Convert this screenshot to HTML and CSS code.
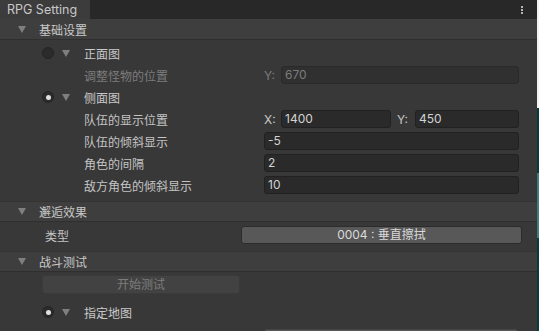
FILE: index.html
```html
<!DOCTYPE html>
<html lang="en">
<head>
    <meta charset="UTF-8">
    <meta name="viewport" content="width=device-width, initial-scale=1.0">
    <title>RPG Setting</title>
    <link rel="stylesheet" href="styles.css">
</head>
<body>
    <div class="window">
        <div class="panel">
            <div class="tabbar">
                <div class="tab">RPG Setting</div>
                <div class="menu"><span></span><span></span><span></span></div>
            </div>

            <div class="section-head"><span class="arrow"></span>基础设置</div>
            <div class="section first">
                <div class="row">
                    <span class="toggle"></span><span class="arrow small"></span>
                    <span class="toggle-label">正面图</span>
                </div>
                <div class="row">
                    <span class="label disabled">调整怪物的位置</span>
                    <div class="field">
                        <span class="axis disabled">Y:</span>
                        <span class="input disabled">670</span>
                    </div>
                </div>
                <div class="row">
                    <span class="toggle on"></span><span class="arrow small"></span>
                    <span class="toggle-label">侧面图</span>
                </div>
                <div class="row">
                    <span class="label">队伍的显示位置</span>
                    <div class="field pairs">
                        <div class="pair"><span class="axis">X:</span><span class="input">1400</span></div>
                        <div class="pair"><span class="axis">Y:</span><span class="input">450</span></div>
                    </div>
                </div>
                <div class="row">
                    <span class="label">队伍的倾斜显示</span>
                    <div class="field"><span class="input">-5</span></div>
                </div>
                <div class="row">
                    <span class="label">角色的间隔</span>
                    <div class="field"><span class="input">2</span></div>
                </div>
                <div class="row">
                    <span class="label">敌方角色的倾斜显示</span>
                    <div class="field"><span class="input">10</span></div>
                </div>
            </div>

            <div class="section-head"><span class="arrow"></span>邂逅效果</div>
            <div class="section">
                <div class="row">
                    <span class="label short">类型</span>
                    <span class="button wide">0004 : 垂直擦拭</span>
                </div>
            </div>

            <div class="section-head"><span class="arrow"></span>战斗测试</div>
            <div class="section last">
                <div class="button start">开始测试</div>
                <div class="row">
                    <span class="toggle on"></span><span class="arrow small"></span>
                    <span class="toggle-label">指定地图</span>
                </div>
                <div class="row">
                    <span class="label"></span>
                    <span class="button field-button"></span>
                </div>
            </div>
        </div>
        <div class="edge">
            <div class="edge-white"></div>
            <div class="edge-dark"></div>
            <div class="edge-light"></div>
            <div class="edge-dark rest"></div>
        </div>
    </div>
</body>
</html>
```

FILE: styles.css
```css
html, body { margin: 0; height: 100%; overflow: hidden; }
body { font-family: Inter, "Noto Sans CJK SC", sans-serif; font-size: 12px; color: #c4c4c4; background: #383838; }

.window { display: flex; height: 331px; }
.panel { width: 537px; background: #383838; overflow: hidden; }

.tabbar { height: 19px; background: #282828; display: flex; align-items: center; }
.tab { width: 83px; height: 19px; line-height: 19px; padding-left: 7px; background: #3c3c3c; color: #c8c8c8; font-size: 12.5px; }
.menu { margin-left: auto; margin-right: 14px; display: flex; flex-direction: column; gap: 1px; }
.menu span { width: 2px; height: 2px; background: #b4b4b4; }

.section-head { height: 20px; display: flex; align-items: center; background: #3e3e3e; border-bottom: 1px solid #2f2f2f; color: #c8c8c8; }
.section-head .arrow { margin-left: 18px; margin-right: 13px; }

.arrow { width: 0; height: 0; border-left: 4px solid transparent; border-right: 4px solid transparent; border-top: 7px solid #7f7f7f; }
.arrow.small { margin-left: 8px; margin-right: 14px; }

.section { padding: 2px 0 5px; }
.section + .section-head { border-top: 1px solid #333333; height: 19px; }
.section.last { padding-top: 3px; }

.row { height: 22px; display: flex; align-items: center; }
.label { width: 180px; padding-left: 84px; flex-shrink: 0; white-space: nowrap; }
.label.short { width: 196px; padding-left: 45px; }
.disabled { color: #7c7c7c; }

.toggle { width: 10px; height: 10px; margin-left: 42px; border-radius: 50%; background: #2b2b2b; border: 1px solid #242424; display: flex; align-items: center; justify-content: center; }
.toggle.on::after { content: ""; width: 5px; height: 5px; border-radius: 50%; background: #e0e0e0; }
.toggle-label { color: #c8c8c8; }

.field { flex: 1; margin-right: 18px; display: flex; align-items: center; }
.pairs { gap: 6px; }
.pair { display: flex; align-items: center; }
.pair:first-child { width: 127px; }
.pair:last-child { flex: 1; }
.pair:last-child .axis { width: 18px; }
.axis { width: 17px; flex-shrink: 0; color: #c8c8c8; }
.axis.disabled { color: #7c7c7c; }
.input { flex: 1; height: 16px; line-height: 16px; padding-left: 3px; background: #2a2a2a; border: 1px solid #212121; border-radius: 3px; color: #d2d2d2; }
.input.disabled { background: #303030; border-color: #2a2a2a; color: #7c7c7c; }

.button { height: 16px; line-height: 16px; text-align: center; background: #585858; border: 1px solid #2c2c2c; border-radius: 3px; color: #dadada; }
.button.wide { flex: 1; margin-right: 15px; }
.button.start { width: 196px; height: 17px; line-height: 17px; margin-left: 42px; margin-bottom: 7px; background: #424242; border-color: #3a3a3a; color: #7c7c7c; }
.button.field-button { flex: 1; margin-right: 19px; margin-top: 8px; border-color: #444; }

.edge { width: 2px; display: flex; flex-direction: column; }
.edge-white { height: 108px; background: #f2f2f2; }
.edge-dark { height: 65px; background: #0b3a3a; }
.edge-light { height: 65px; background: #3f7e7c; }
.edge-dark.rest { flex: 1; }
```
